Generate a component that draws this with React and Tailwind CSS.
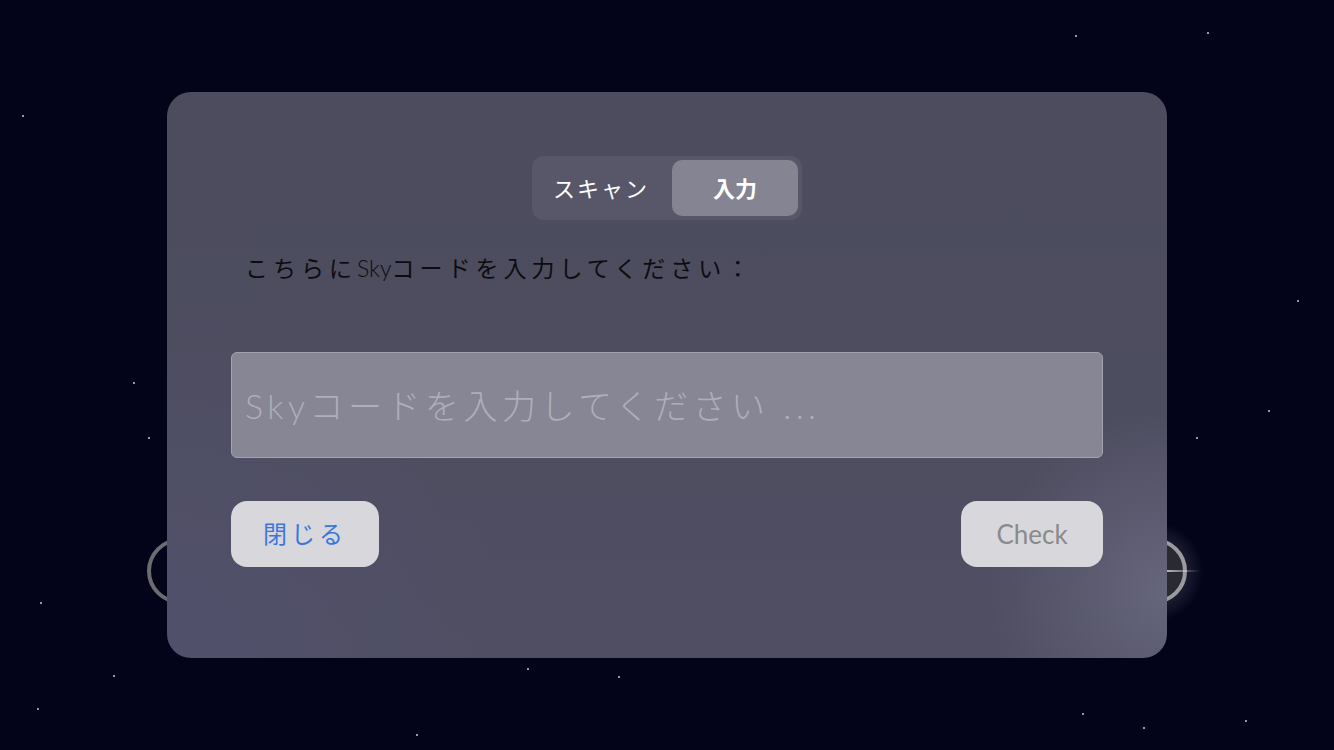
import { useState } from 'react'

const stars = [
  [22, 115], [133, 382], [148, 437], [40, 602], [113, 675], [37, 708],
  [527, 668], [618, 676], [416, 734], [1075, 35], [1207, 32], [1196, 437],
  [1297, 300], [1268, 410], [1245, 720], [1082, 713], [1143, 727],
]

export default function App() {
  const [tab, setTab] = useState('input')
  const [code, setCode] = useState('')

  return (
    <div
      className="relative w-[1334px] h-[750px] overflow-hidden bg-[#03031a] flex items-center justify-center"
      style={{ fontFamily: '"Lato", "Noto Sans CJK JP", sans-serif' }}
    >
      {/* stars */}
      {stars.map(([x, y], i) => (
        <span
          key={i}
          className="absolute w-[2px] h-[2px] rounded-full bg-[#c8c8e0]"
          style={{ left: x, top: y }}
        />
      ))}

      {/* circles peeking out behind the dialog */}
      <div className="absolute left-[147px] top-[538px] w-[66px] h-[66px] rounded-full border-[4px] border-[#6b6b70]" />
      <div className="absolute left-[1104px] top-[522px] w-[100px] h-[100px] rounded-full bg-[radial-gradient(circle,rgba(255,255,255,0.3)_0%,rgba(255,255,255,0.1)_45%,transparent_70%)]" />
      <div className="absolute left-[1121px] top-[538px] w-[66px] h-[66px] rounded-full border-[4px] border-[#9a9aa0] bg-[#2a2a33]" />
      <div className="absolute left-[1150px] top-[570px] w-[50px] h-[2px] bg-[linear-gradient(90deg,#ffffff,transparent)]" />

      {/* dialog */}
      <div className="relative w-[1000px] h-[566px] rounded-[24px] px-16 pt-16 bg-[radial-gradient(circle_at_100%_88%,rgba(120,120,145,0.55),transparent_16%),radial-gradient(circle_at_0%_100%,rgba(85,85,125,0.35),transparent_30%),linear-gradient(180deg,#4c4c5e,#4f4e62)]">
        <div className="flex justify-center">
          <div className="flex p-1 w-[270px] h-16 rounded-[12px] bg-[#58576a]">
            <button
              onClick={() => setTab('scan')}
              className={`w-[136px] h-14 pr-[6px] rounded-[10px] text-[22px] tracking-[2px] text-white ${tab === 'scan' ? 'bg-[#858492] font-bold' : ''}`}
            >
              スキャン
            </button>
            <button
              onClick={() => setTab('input')}
              className={`flex-1 h-14 rounded-[10px] text-[22px] text-white ${tab === 'input' ? 'bg-[#858492] font-bold' : ''}`}
            >
              入力
            </button>
          </div>
        </div>

        <p className="mt-8 pl-[14px] text-[23px] leading-8 tracking-[5px] text-[#0c0c10]">
          こちらに<span className="font-light tracking-normal">Sky</span>コードを入力してください：
        </p>

        <input
          value={code}
          onChange={(e) => setCode(e.target.value)}
          placeholder="Skyコードを入力してください ..."
          className="mt-[68px] w-full h-[106px] px-[13px] rounded-[6px] border border-[#a3a2b0] bg-[#878694] text-[34px] font-light tracking-[4.5px] text-white placeholder:text-[#afaebb] outline-none"
        />

        <div className="mt-[43px] flex justify-between">
          <button className="w-[148px] h-[66px] rounded-[16px] bg-[#d8d8dc] text-[24px] tracking-[4px] text-[#3b76dc]">
            閉じる
          </button>
          <button className="w-[142px] h-[66px] rounded-[16px] bg-[#d8d8dc] text-[26px] text-[#8a8a8c]">
            Check
          </button>
        </div>
      </div>
    </div>
  )
}
